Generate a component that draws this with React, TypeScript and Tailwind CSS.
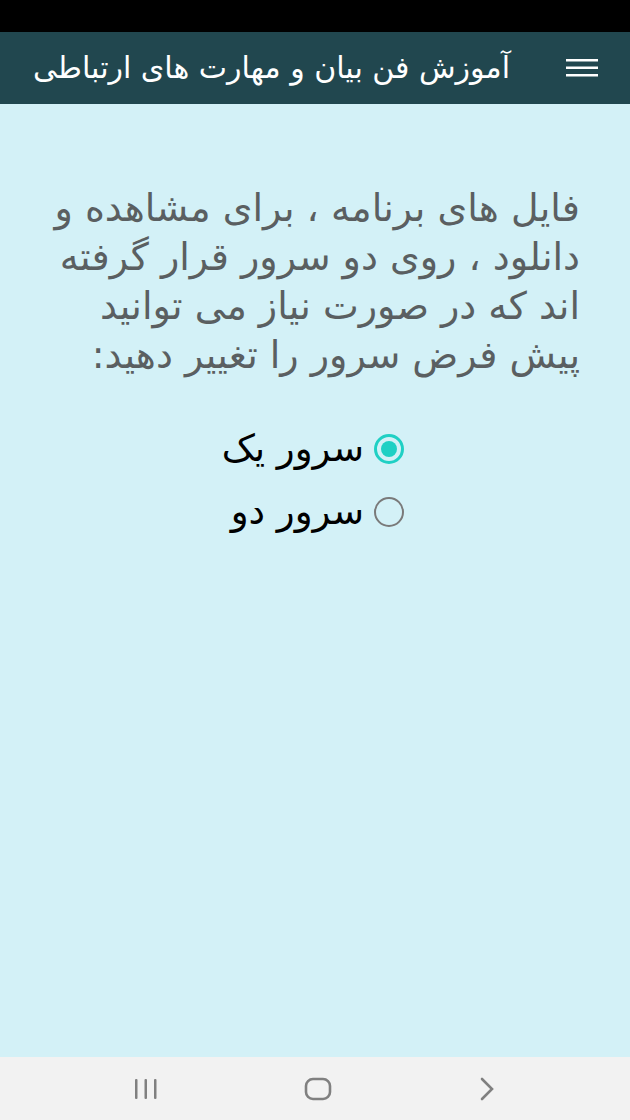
import React, { useState } from 'react';

const servers = [
  { id: 'one', label: 'سرور یک' },
  { id: 'two', label: 'سرور دو' },
];

const lines = [
  'فایل های برنامه ، برای مشاهده و',
  'دانلود ، روی دو سرور قرار گرفته',
  'اند که در صورت نیاز می توانید',
  'پیش فرض سرور را تغییر دهید:',
];

const App: React.FC = () => {
  const [selected, setSelected] = useState('one');

  return (
    <div
      dir="rtl"
      className="flex h-[1120px] w-[630px] flex-col bg-[#d3f1f7]"
      style={{ fontFamily: '"DejaVu Sans", "Noto Sans", sans-serif' }}
    >
      {/* status bar */}
      <div className="h-[32px] bg-black" />

      {/* app bar */}
      <div className="flex h-[72px] items-center bg-[#21474f] pr-[32px] text-white">
        <svg width="32" height="18" viewBox="0 0 32 18" className="shrink-0">
          <rect x="0" y="0" width="32" height="2.5" fill="#fff" />
          <rect x="0" y="7.5" width="32" height="2.5" fill="#fff" />
          <rect x="0" y="15" width="32" height="2.5" fill="#fff" />
        </svg>
        <h1 className="mr-[56px] whitespace-nowrap text-[30px] leading-none">آموزش فن بیان و مهارت های ارتباطی</h1>
      </div>

      {/* content */}
      <div className="flex-1 pr-[50px] pt-[80px]">
        <p className="whitespace-nowrap text-[38px] leading-[49px] text-[#5a5f61]">
          {lines.map((l, i) => (
            <span key={i} className="block">{l}</span>
          ))}
        </p>

        <div className="mr-[176px] mt-[46px] flex flex-col gap-[17px]">
          {servers.map(s => (
            <label key={s.id} className="flex cursor-pointer items-center gap-[10px]" onClick={() => setSelected(s.id)}>
              {selected === s.id ? (
                <span className="flex h-[30px] w-[30px] shrink-0 items-center justify-center rounded-full border-[3px] border-[#1fd0c4]">
                  <span className="h-[16px] w-[16px] rounded-full bg-[#1fd0c4]" />
                </span>
              ) : (
                <span className="h-[30px] w-[30px] shrink-0 rounded-full border-[2.5px] border-[#7a7a7a]" />
              )}
              <span className="whitespace-nowrap text-[37px] leading-[46px] text-black">{s.label}</span>
            </label>
          ))}
        </div>
      </div>

      {/* navigation bar */}
      <div dir="ltr" className="flex h-[63px] items-center justify-around bg-[#f2f2f2] px-[60px]">
        <svg width="26" height="22" viewBox="0 0 26 22">
          <rect x="2" y="1" width="2.5" height="20" rx="1" fill="#808080" />
          <rect x="11.5" y="1" width="2.5" height="20" rx="1" fill="#808080" />
          <rect x="21" y="1" width="2.5" height="20" rx="1" fill="#808080" />
        </svg>
        <svg width="28" height="24" viewBox="0 0 28 24">
          <rect x="2" y="2" width="24" height="20" rx="7" fill="none" stroke="#808080" strokeWidth="2.6" />
        </svg>
        <svg width="20" height="24" viewBox="0 0 20 24">
          <path d="M5 2 L15 12 L5 22" fill="none" stroke="#808080" strokeWidth="2.6" strokeLinecap="round" />
        </svg>
      </div>
    </div>
  );
};

export default App;
